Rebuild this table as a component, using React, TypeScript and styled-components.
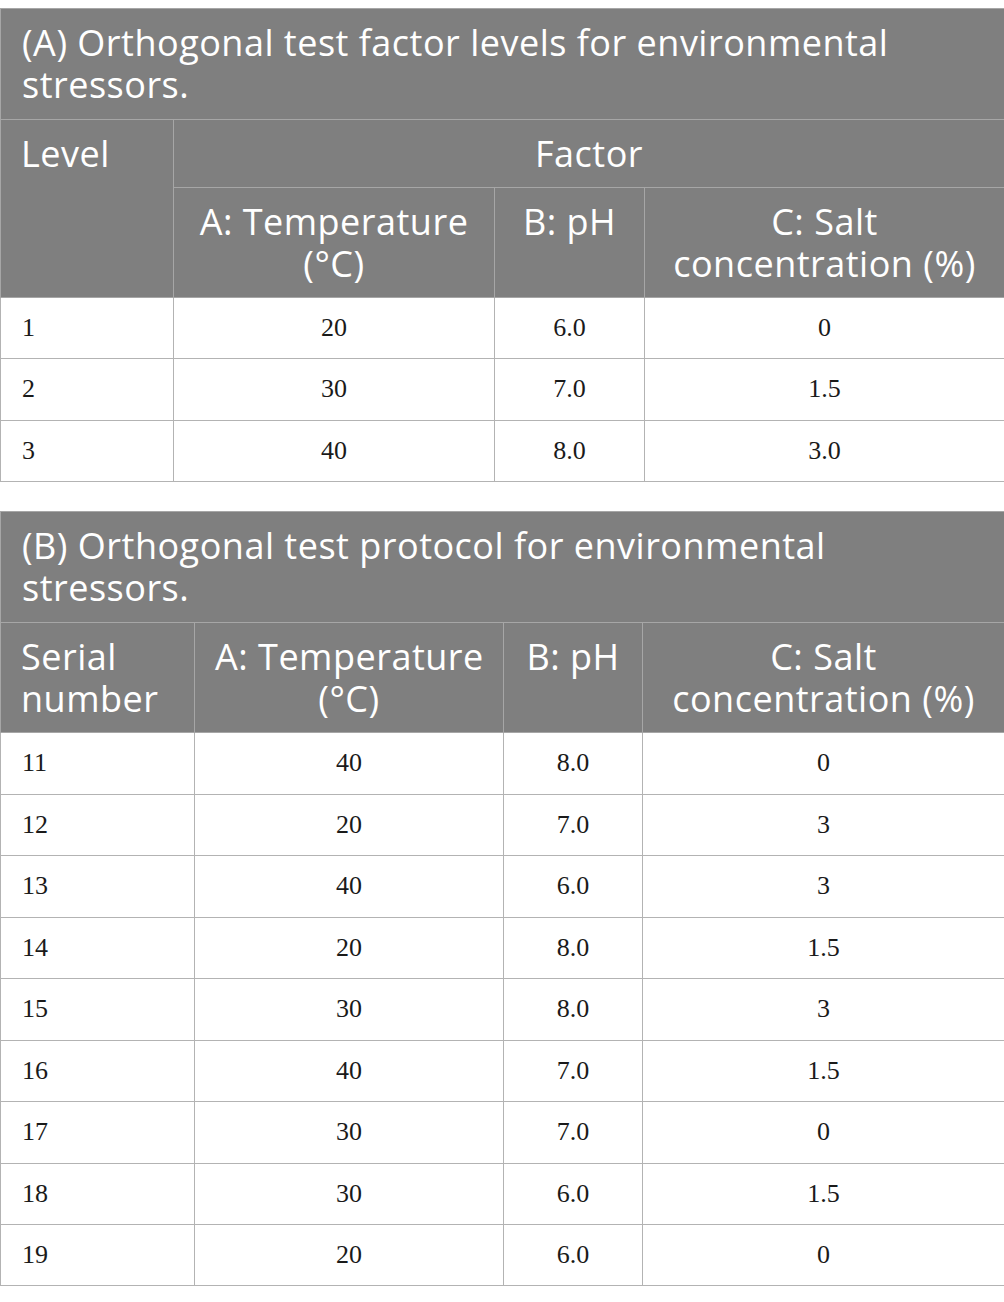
import styled, { createGlobalStyle } from 'styled-components';

const GlobalStyle = createGlobalStyle`
  body {
    margin: 0;
    background: #ffffff;
  }
`;

const Page = styled.div`
  display: flex;
  flex-direction: column;
  gap: 29px;
  padding-top: 8px;
  width: 1004px;
`;

const Table = styled.table`
  width: 1004px;
  border-collapse: collapse;
  table-layout: fixed;
  border: 1px solid #aaaaaa;
`;

const Col = styled.col<{ $w: number }>`
  width: ${(p) => p.$w}px;
`;

const headFont = `
  font-family: 'Open Sans', 'Liberation Sans', sans-serif;
  font-weight: 400;
  font-size: 36px;
  letter-spacing: 0.5px;
  line-height: 42px;
`;

const TitleCell = styled.th`
  ${headFont}
  background: #7f7f7f;
  color: #ffffff;
  text-align: left;
  padding: 13px 21px 13px 21px;
  border: 1px solid #a6a6a6;
`;

const HeadCell = styled.th<{ $align?: 'left' | 'center' }>`
  ${headFont}
  background: #7f7f7f;
  color: #ffffff;
  text-align: ${(p) => p.$align || 'center'};
  vertical-align: top;
  white-space: nowrap;
  padding: 13px 20px 12px 20px;
  border: 1px solid #a6a6a6;
`;

const Cell = styled.td<{ $align?: 'left' | 'center' }>`
  font-family: 'Liberation Serif', 'Times New Roman', serif;
  font-size: 26px;
  line-height: 36.45px;
  color: #1a1a1a;
  text-align: ${(p) => p.$align || 'center'};
  padding: 12px 21px 12px 21px;
  border: 1px solid #b3b3b3;
`;

const factorLevels = [
  ['1', '20', '6.0', '0'],
  ['2', '30', '7.0', '1.5'],
  ['3', '40', '8.0', '3.0'],
];

const protocol = [
  ['11', '40', '8.0', '0'],
  ['12', '20', '7.0', '3'],
  ['13', '40', '6.0', '3'],
  ['14', '20', '8.0', '1.5'],
  ['15', '30', '8.0', '3'],
  ['16', '40', '7.0', '1.5'],
  ['17', '30', '7.0', '0'],
  ['18', '30', '6.0', '1.5'],
  ['19', '20', '6.0', '0'],
];

function DataRows({ rows }: { rows: string[][] }) {
  return (
    <tbody>
      {rows.map((row) => (
        <tr key={row[0]}>
          {row.map((v, i) => (
            <Cell key={i} $align={i === 0 ? 'left' : 'center'}>
              {v}
            </Cell>
          ))}
        </tr>
      ))}
    </tbody>
  );
}

export default function App() {
  return (
    <>
      <GlobalStyle />
      <Page>
        <Table>
          <colgroup>
            <Col $w={173} />
            <Col $w={321} />
            <Col $w={150} />
            <Col $w={360} />
          </colgroup>
          <thead>
            <tr>
              <TitleCell colSpan={4}>
                (A) Orthogonal test factor levels for environmental stressors.
              </TitleCell>
            </tr>
            <tr>
              <HeadCell rowSpan={2} $align="left">
                Level
              </HeadCell>
              <HeadCell colSpan={3}>Factor</HeadCell>
            </tr>
            <tr>
              <HeadCell>
                A: Temperature
                <br />
                (°C)
              </HeadCell>
              <HeadCell>B: pH</HeadCell>
              <HeadCell>
                C: Salt
                <br />
                concentration (%)
              </HeadCell>
            </tr>
          </thead>
          <DataRows rows={factorLevels} />
        </Table>

        <Table>
          <colgroup>
            <Col $w={194} />
            <Col $w={309} />
            <Col $w={139} />
            <Col $w={362} />
          </colgroup>
          <thead>
            <tr>
              <TitleCell colSpan={4}>
                (B) Orthogonal test protocol for environmental stressors.
              </TitleCell>
            </tr>
            <tr>
              <HeadCell $align="left">
                Serial
                <br />
                number
              </HeadCell>
              <HeadCell>
                A: Temperature
                <br />
                (°C)
              </HeadCell>
              <HeadCell>B: pH</HeadCell>
              <HeadCell>
                C: Salt
                <br />
                concentration (%)
              </HeadCell>
            </tr>
          </thead>
          <DataRows rows={protocol} />
        </Table>
      </Page>
    </>
  );
}
